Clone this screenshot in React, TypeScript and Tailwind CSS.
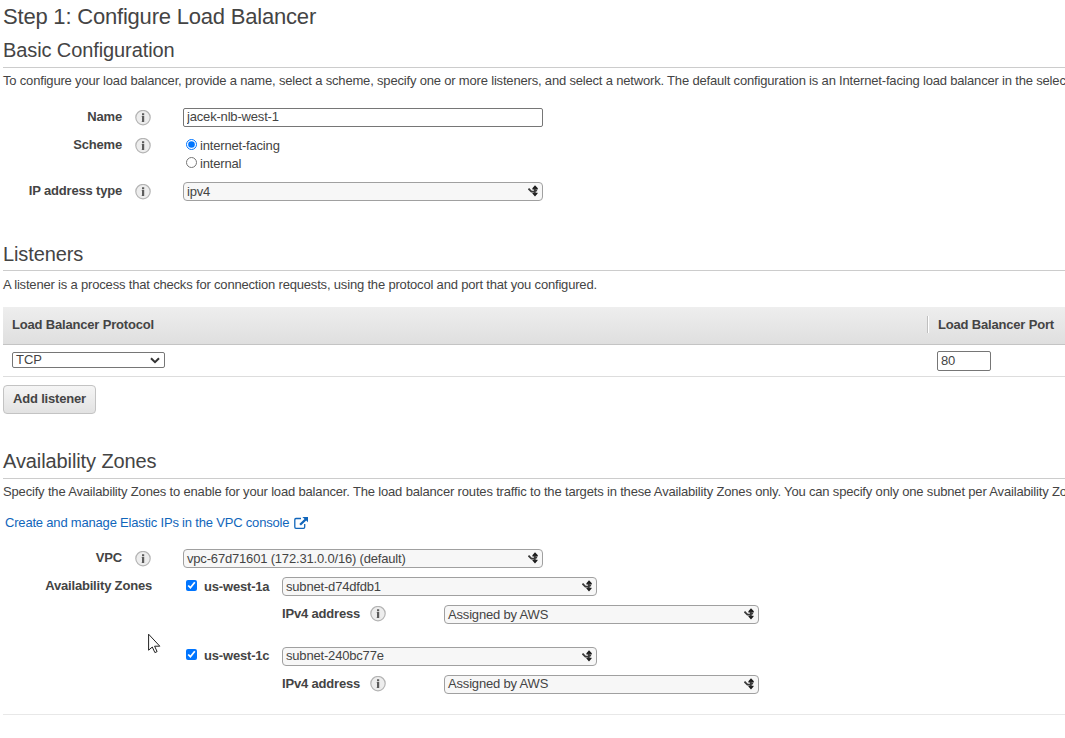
import React from 'react';

function Info({ className = '' }: { className?: string }) {
  return (
    <svg className={`block h-4 w-4 shrink-0 ${className}`} viewBox="0 0 16 16">
      <circle cx="8" cy="7.6" r="7.2" fill="#ededed" stroke="#b4b4b4" strokeWidth="1.2" />
      <path d="M7 3.2h2.2v2H7zM7 6h2.2v6H7z" fill="#5c5c5c" />
      <path d="M6 6h1v1H6zM6 11h1v1H6zM9.2 11h1v1h-1z" fill="#cfcfcf" />
    </svg>
  );
}

function Combo({ value, className = '', textClass = 'leading-[18px]' }: { value: string; className?: string; textClass?: string }) {
  return (
    <div className={`flex h-[19px] shrink-0 justify-between rounded border border-[#a0a0a0] bg-[#f7f7f7] pl-[3px] pr-1 ${className}`}>
      <span className={textClass}>{value}</span>
      <svg className="mt-[2px] h-3 w-[10px]" viewBox="0 0 10 12">
        <path d="M7 .2 9.8 3.2V4.4H4.4V3.2zM7 11.4 9.6 8.6V7.8H4.4v.8z" fill="#1c1c1c" />
        <path d="M.5 3.6 3.4 6.6H6L9 5.2M6.8 3.4v5" fill="none" stroke="#3a3a3a" strokeWidth="1.8" />
      </svg>
    </div>
  );
}

function Heading({ children, className = 'leading-[34px]' }: { children: React.ReactNode; className?: string }) {
  return <h2 className={`h-[35px] border-b border-[#ccc] text-[20px] tracking-[-0.1px] ${className}`}>{children}</h2>;
}

interface ZoneProps {
  name: string;
  subnet: string;
  textClass?: string;
  boxClass?: string;
  nameClass?: string;
}

function Zone({ name, subnet, textClass = 'leading-[18px]', boxClass = 'mt-[3px]', nameClass = 'leading-[19px]' }: ZoneProps) {
  return (
    <div>
      <div className="flex h-7 items-start">
        <input type="checkbox" defaultChecked className={`m-0 ml-[3px] h-[11px] w-[11px] ${boxClass}`} />
        <span className={`ml-[7px] w-[78px] font-bold ${nameClass}`}>{name}</span>
        <Combo value={subnet} className="w-[315px]" textClass={textClass} />
      </div>
      <div className="flex h-[42px] items-start">
        <span className="ml-[99px] w-[88px] font-bold leading-[17px]">IPv4 address</span>
        <Info className="mt-px" />
        <Combo value="Assigned by AWS" className="ml-[58px] w-[315px]" textClass={textClass} />
      </div>
    </div>
  );
}

export default function App() {
  return (
    <main className="relative h-[738px] w-[1065px] overflow-hidden whitespace-nowrap bg-white pl-[3px] font-['Liberation_Sans',Arial,sans-serif] text-[13px] tracking-[-0.18px] text-[#444]">
      <h1 className="h-[33px] text-[22px] leading-[33px] tracking-[-0.2px]">Step 1: Configure Load Balancer</h1>
      <Heading>Basic Configuration</Heading>
      <p className="h-10 leading-[26px]">
        To configure your load balancer, provide a name, select a scheme, specify one or more listeners, and select a network. The default configuration is an Internet-facing load balancer in the selected
      </p>
      <div className="flex h-7 items-start">
        <label className="w-[119px] text-right font-bold leading-[18px]">Name</label>
        <Info className="ml-[13px] mt-[2px]" />
        <input defaultValue="jacek-nlb-west-1" className="ml-8 h-[19px] w-[360px] rounded-[2px] border border-[#767676] px-[3px] pb-[2px] leading-[15px] tracking-[-0.18px]" />
      </div>
      <div className="flex h-[46px] items-start">
        <label className="w-[119px] text-right font-bold leading-[18px]">Scheme</label>
        <Info className="ml-[13px] mt-[2px]" />
        <div className="ml-[35px]">
          <label className="flex h-[18px] leading-5"><input type="radio" name="scheme" defaultChecked className="m-0 mr-[3px] mt-[3px] h-[11px] w-[11px]" />internet-facing</label>
          <label className="flex h-[18px] leading-5"><input type="radio" name="scheme" className="m-0 mr-[3px] mt-[3px] h-[11px] w-[11px]" />internal</label>
        </div>
      </div>
      <div className="flex h-[54px] items-start">
        <label className="w-[119px] text-right font-bold leading-[18px]">IP address type</label>
        <Info className="ml-[13px] mt-[2px]" />
        <Combo value="ipv4" className="ml-8 w-[360px]" />
      </div>
      <Heading className="leading-[36px]">Listeners</Heading>
      <p className="h-9 leading-[28px]">A listener is a process that checks for connection requests, using the protocol and port that you configured.</p>
      <div className="flex h-[38px] items-center border-b border-[#c4c4c4] bg-linear-to-b from-[#eee] to-[#dfdfdf] font-bold">
        <span className="w-[924px] pb-[2px] pl-[9px] leading-5">Load Balancer Protocol</span>
        <span className="mb-[2px] h-[17px] w-[2px] border-l border-[#bfbfbf] bg-white" />
        <span className="pb-[2px] pl-[9px] leading-5">Load Balancer Port</span>
      </div>
      <div className="flex h-8 items-start border-b border-[#ddd]">
        <div className="ml-[9px] mt-[7px] flex h-4 w-[153px] justify-between rounded-[2px] border border-[#767676] pl-[3px] pr-1">
          <span className="leading-[13px] tracking-normal">TCP</span>
          <svg className="mt-[4px] h-[7px] w-[10px]" viewBox="0 0 10 7"><path d="M1 1.2 5 5.2 9 1.2" fill="none" stroke="#333" strokeWidth="2" /></svg>
        </div>
        <input defaultValue="80" className="ml-[772px] mt-[6px] h-5 w-[54px] shrink-0 rounded-[2px] border border-[#767676] px-[3px] pb-[2px] leading-[16px] tracking-[-0.18px]" />
      </div>
      <button className="mt-2 block h-[29px] w-[93px] rounded border border-[#c3c3c3] bg-linear-to-b from-[#f5f5f5] to-[#e2e2e2] pb-[2px] font-bold tracking-[-0.18px]">Add listener</button>
      <div className="h-[30px]" />
      <Heading>Availability Zones</Heading>
      <p className="h-7 leading-[26px] tracking-[-0.168px]">Specify the Availability Zones to enable for your load balancer. The load balancer routes traffic to the targets in these Availability Zones only. You can specify only one subnet per Availability Zone.</p>
      <a className="ml-[2px] flex h-[42px] items-start leading-8 tracking-[-0.19px] text-[#1166bb]">
        Create and manage Elastic IPs in the VPC console
        <svg className="ml-[5px] mt-[10px] h-3 w-[14px]" viewBox="0 0 14 12">
          <path d="M7 1.5H2A1.3 1.3 0 0 0 .8 2.8v7.2A1.3 1.3 0 0 0 2 11.3h7.5a1.3 1.3 0 0 0 1.2-1.3V7" fill="none" stroke="#1166bb" strokeWidth="1.3" />
          <path d="M8.4 0H14v5.3l-1.8-1.8-5.3 5-1.6-1.6 5.2-4.9z" fill="#1166bb" />
        </svg>
      </a>
      <div className="flex h-7 items-start">
        <label className="w-[119px] text-right font-bold leading-[18px]">VPC</label>
        <Info className="ml-[13px] mt-[2px]" />
        <Combo value="vpc-67d71601 (172.31.0.0/16) (default)" className="ml-8 w-[360px]" />
      </div>
      <div className="flex h-[138px] items-start border-b border-[#e8e8e8]">
        <label className="w-[149px] text-right font-bold leading-[18px]">Availability Zones</label>
        <div className="ml-[31px]">
          <Zone name="us-west-1a" subnet="subnet-d74dfdb1" />
          <Zone name="us-west-1c" subnet="subnet-240bc77e" textClass="leading-[16px]" boxClass="mt-[2px]" nameClass="leading-[17px]" />
        </div>
      </div>
      <svg className="absolute left-[148px] top-[633px] h-[21px] w-[13px]" viewBox="0 0 13 21">
        <path d="M.6 1.2v16L4.3 14l2.6 5.6 2.2-1-2.5-5.4h5.2z" fill="#fff" stroke="#222" />
      </svg>
    </main>
  );
}
